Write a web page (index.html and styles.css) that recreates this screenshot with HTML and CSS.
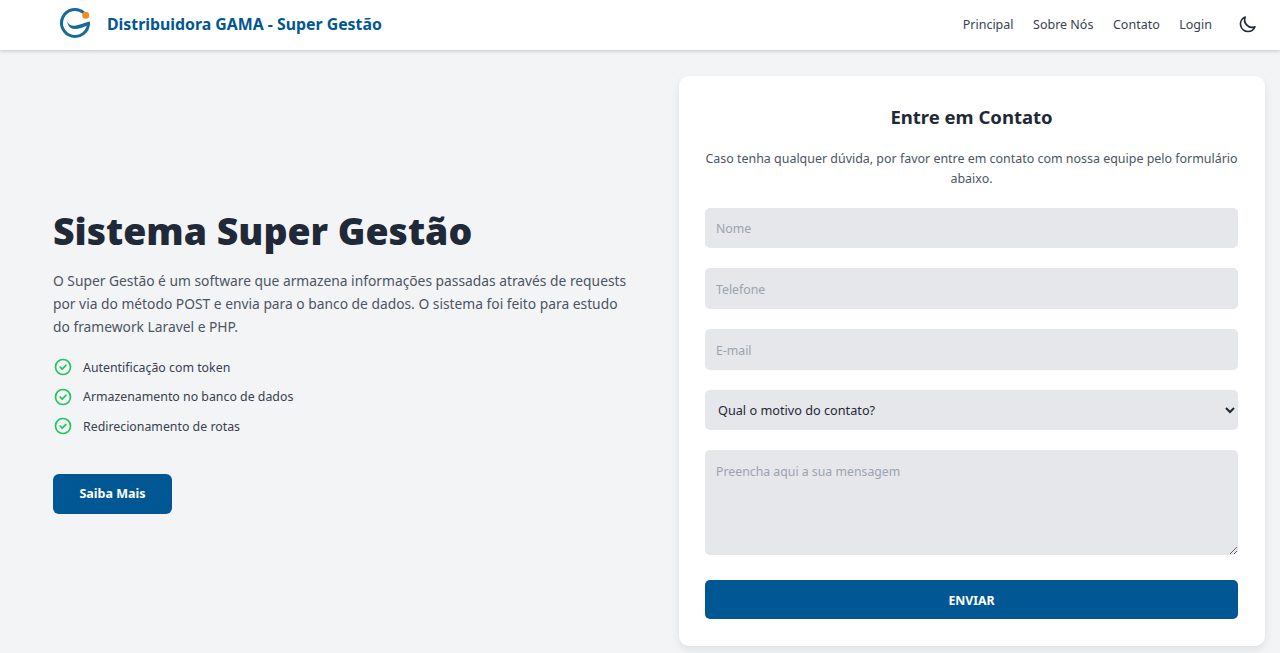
FILE: index.html
```html
<!DOCTYPE html>
<html lang="pt-BR">
<head>
<meta charset="utf-8">
<title>Distribuidora GAMA - Super Gestão</title>
<link rel="stylesheet" href="styles.css">
</head>
<body>
<header class="navbar">
  <a class="brand" href="#">
    <svg class="logo" viewBox="0 0 34 34" width="34" height="34" aria-hidden="true">
      <path d="M25.700 6.700A13.500 13.500 0 1 0 30.500 17" fill="none" stroke="#17699c" stroke-width="3"/>
      <path d="M9 15.500C11 19 14 20.500 18 19.500C22 18.500 26 17 32 15.500V18.500C26 21 21 23 16.500 23C12.500 23 10 20 9 15.500z" fill="#17699c"/>
      <circle cx="27.700" cy="9.300" r="3.500" fill="#f28c1e"/>
    </svg>
    <span class="brand-name">Distribuidora GAMA - Super Gestão</span>
  </a>
  <nav class="nav">
    <a href="#">Principal</a>
    <a href="#">Sobre Nós</a>
    <a href="#">Contato</a>
    <a href="#">Login</a>
    <button class="theme" type="button" aria-label="Tema">
      <svg viewBox="0 0 24 24" width="20" height="20" fill="none" stroke="#1f2937" stroke-width="2" stroke-linecap="round" stroke-linejoin="round"><path d="M20.354 15.354A9 9 0 0 1 8.646 3.646 9.003 9.003 0 0 0 12 21a9.003 9.003 0 0 0 8.354-5.646z"/></svg>
    </button>
  </nav>
</header>
<main class="main">
  <section class="intro">
    <h1>Sistema Super Gestão</h1>
    <p class="lead">O Super Gestão é um software que armazena informações passadas através de requests por via do método POST e envia para o banco de dados. O sistema foi feito para estudo do framework Laravel e PHP.</p>
    <ul class="features">
      <li><svg viewBox="0 0 24 24" width="20" height="20" fill="none" stroke="#22c55e" stroke-width="2" stroke-linecap="round" stroke-linejoin="round"><circle cx="12" cy="12" r="9"/><path d="M8.500 12l2.500 2.500 4.500-4.500"/></svg>Autentificação com token</li>
      <li><svg viewBox="0 0 24 24" width="20" height="20" fill="none" stroke="#22c55e" stroke-width="2" stroke-linecap="round" stroke-linejoin="round"><circle cx="12" cy="12" r="9"/><path d="M8.500 12l2.500 2.500 4.500-4.500"/></svg>Armazenamento no banco de dados</li>
      <li><svg viewBox="0 0 24 24" width="20" height="20" fill="none" stroke="#22c55e" stroke-width="2" stroke-linecap="round" stroke-linejoin="round"><circle cx="12" cy="12" r="9"/><path d="M8.500 12l2.500 2.500 4.500-4.500"/></svg>Redirecionamento de rotas</li>
    </ul>
    <a class="cta" href="#">Saiba Mais</a>
  </section>
  <section class="card">
    <h2>Entre em Contato</h2>
    <p class="sub">Caso tenha qualquer dúvida, por favor entre em contato com nossa equipe pelo formulário abaixo.</p>
    <form class="form">
      <input class="field" type="text" placeholder="Nome">
      <input class="field" type="text" placeholder="Telefone">
      <input class="field" type="text" placeholder="E-mail">
      <select class="field select"><option>Qual o motivo do contato?</option></select>
      <textarea class="field area" placeholder="Preencha aqui a sua mensagem"></textarea>
      <button class="send" type="button">ENVIAR</button>
    </form>
  </section>
</main>
</body>
</html>
```
FILE: styles.css
```css
* { box-sizing: border-box; }
html, body { margin: 0; height: 100%; }
body {
  background: #f3f4f6;
  color: #1f2937;
  font-family: "Noto Sans", "Open Sans", sans-serif;
  overflow: hidden;
}
a { text-decoration: none; color: inherit; }
.navbar {
  height: 50px;
  background: #fff;
  box-shadow: 0 1px 4px rgba(0,0,0,.2);
  display: flex;
  align-items: center;
  justify-content: space-between;
  padding: 0 22px 2px 58px;
  position: relative;
}
.brand { display: flex; align-items: center; gap: 15px; }
.logo { display: block; margin-top: -2px; }
.brand-name { font-size: 15.850px; font-weight: 700; color: #015794; }
.nav { display: flex; align-items: center; gap: 19.500px; font-size: 12.500px; color: #374151; }
.theme { border: 0; background: none; padding: 0; margin-left: 6.500px; display: flex; }
.main {
  display: grid;
  grid-template-columns: 1fr 586px;
  gap: 40px;
  padding: 26px 15px 0 53px;
  align-items: start;
}
.intro { padding-top: 131px; }
h1 { margin: 0; font-size: 37.400px; font-weight: 900; line-height: 48px; color: #1f2937; }
.lead { margin: 13.500px 0 0; max-width: 580px; font-size: 13.800px; line-height: 23px; color: #4b5563; }
.features { list-style: none; margin: 14.900px 0 0; padding: 0; font-size: 12.350px; color: #374151; }
.features li { display: flex; align-items: center; gap: 10px; height: 29.500px; }
.cta {
  display: inline-block;
  margin-top: 33.100px;
  width: 119px;
  height: 40px;
  line-height: 39px;
  text-align: center;
  background: #015794;
  color: #fff;
  font-weight: 700;
  font-size: 12.500px;
  border-radius: 6px;
}
.card {
  height: 570px;
  background: #fff;
  border-radius: 10px;
  box-shadow: 0 4px 10px rgba(0,0,0,.08);
  padding: 27px 27px 26px 26px;
}
h2 { margin: 0; font-size: 18.500px; line-height: 28px; font-weight: 700; text-align: center; color: #1f2937; }
.sub { margin: 18px 0 0; font-size: 12.450px; line-height: 20px; text-align: center; color: #4b5563; }
.form { display: flex; flex-direction: column; gap: 20px; margin-top: 18.600px; }
.field {
  display: block;
  width: 100%;
  height: 40.670px;
  border: 0;
  border-radius: 5px;
  background: #e5e7eb;
  padding: 2px 11px 0;
  font: 12.300px "Noto Sans", "Open Sans", sans-serif;
  color: #1f2937;
}
.field::placeholder { color: #9ca3af; opacity: 1; }
.select { padding: 0 0 0 9px; font-size: 12.700px; }
.area { height: 104.730px; padding: 13px 11px; }
.send {
  height: 39px;
  margin-top: 5px;
  border: 0;
  border-radius: 5px;
  padding: 2px 0 0;
  background: #015794;
  color: #fff;
  font: 700 12.300px "Noto Sans", "Open Sans", sans-serif;
}
```
